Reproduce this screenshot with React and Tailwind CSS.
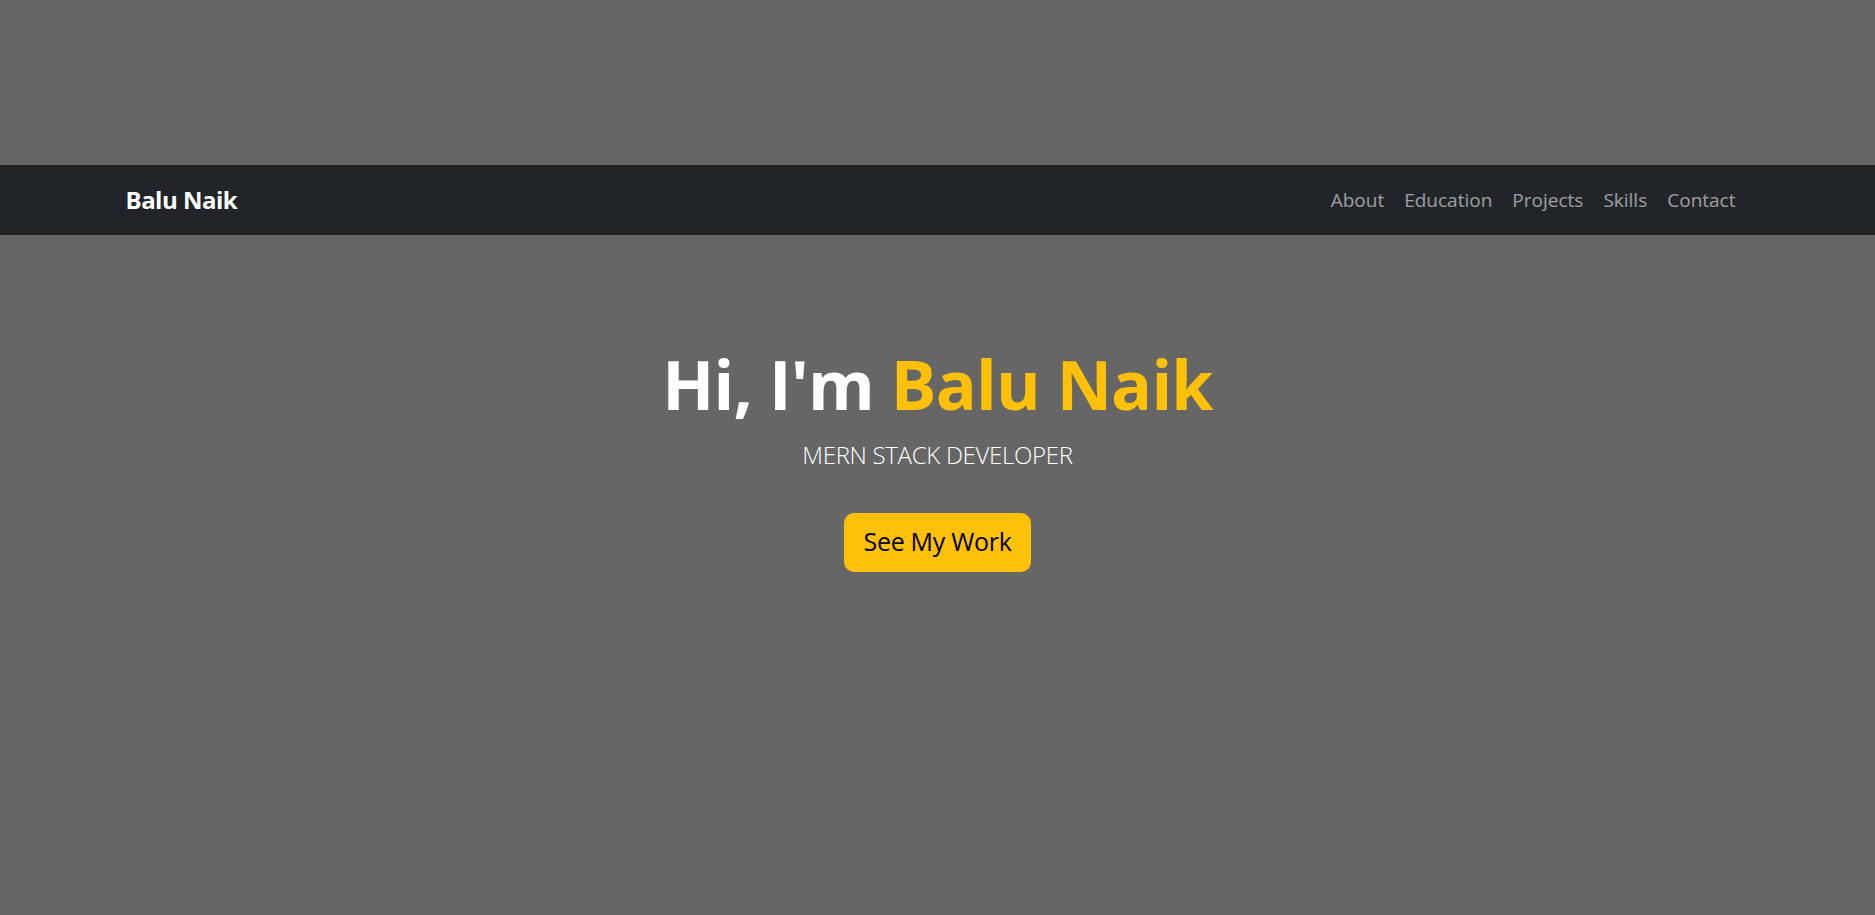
import React from 'react';

const links = ["About", "Education", "Projects", "Skills", "Contact"];

function App() {
    return (
        <div className="min-h-screen bg-[#666666]" style={{ fontFamily: '"Open Sans", "Noto Sans", sans-serif' }}>
            <div className="h-[165px]"></div>

            {/* Navbar */}
            <nav className="h-[70px] bg-[#212529]">
                <div className="mx-auto flex h-full max-w-[1650px] items-center justify-between pl-[13px] pr-[17px]">
                    <a className="text-[24px] font-bold text-white tracking-[-0.5px]">Balu Naik</a>
                    <ul className="flex items-center">
                        {links.map((link) => (
                            <li key={link}>
                                <a className="block px-[10px] text-[19px] text-white/55">{link}</a>
                            </li>
                        ))}
                    </ul>
                </div>
            </nav>

            {/* Hero */}
            <section className="flex flex-col items-center pt-[108px] text-center">
                <h1 className="text-[68px] font-bold leading-[1.2] text-white tracking-[-0.8px]">
                    Hi, I'm <span className="text-[#ffc107]">Balu Naik</span>
                </h1>
                <p className="mt-[12px] text-[24px] font-light leading-[1.5] text-white tracking-[-0.3px]">
                    MERN STACK DEVELOPER
                </p>
                <button className="mt-[40px] h-[59px] w-[187px] rounded-[10px] bg-[#ffc107] text-[25px] text-black tracking-[-0.3px]">
                    See My Work
                </button>
            </section>
        </div>
    );
}

export default App;
